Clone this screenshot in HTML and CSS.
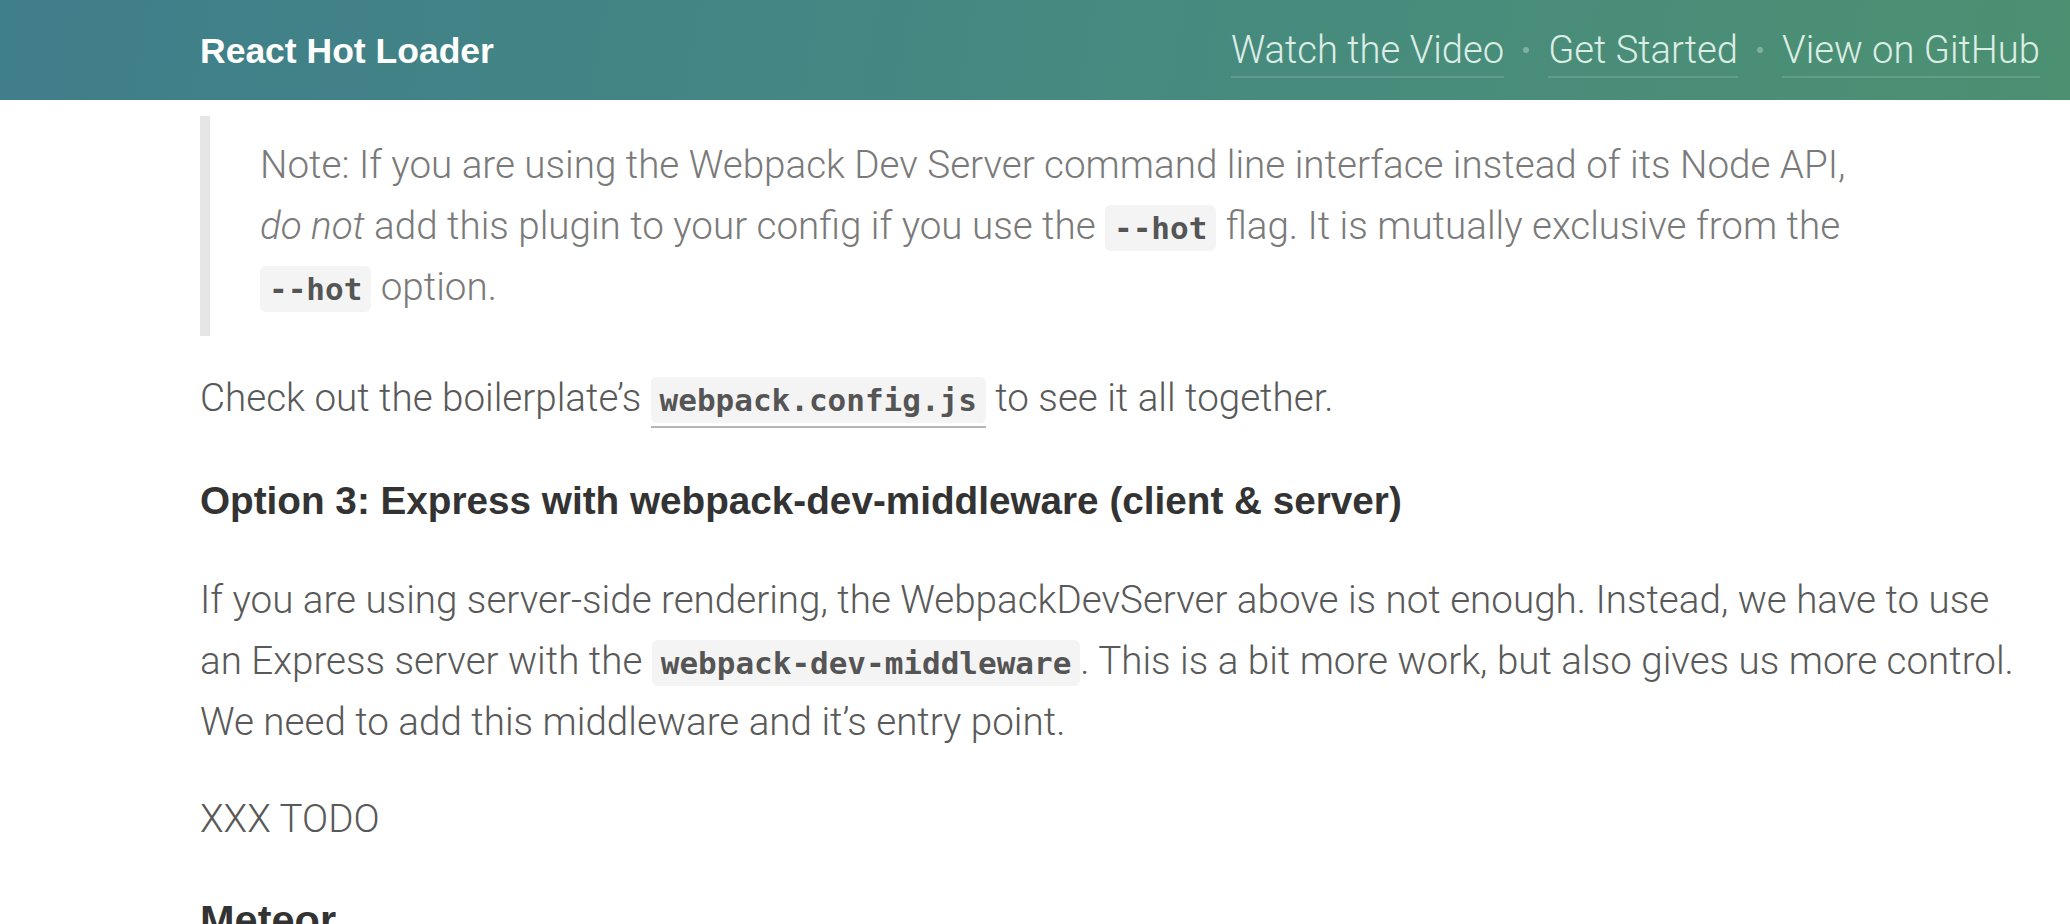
FILE: index.html
```html
<!DOCTYPE html>
<html lang="en">
<head>
    <meta charset="UTF-8">
    <meta name="viewport" content="width=device-width, initial-scale=1.0">
    <title>React Hot Loader</title>
    <link rel="stylesheet" href="styles.css">
</head>
<body>

<!-- Top bar -->
<header class="topbar">
    <a class="brand" href="#">React Hot Loader</a>
    <nav class="topnav">
        <a href="#">Watch the Video</a>
        <span class="dot"></span>
        <a href="#">Get Started</a>
        <span class="dot"></span>
        <a href="#">View on GitHub</a>
    </nav>
</header>

<div class="content">
    <blockquote>
        <p>Note: If you are using the Webpack Dev Server command line interface instead of its Node API,
        <em>do not</em> add this plugin to your config if you use the <code>--hot</code> flag. It is mutually exclusive from the
        <code>--hot</code> option.</p>
    </blockquote>

    <p>Check out the boilerplate’s <a class="code-link" href="#"><code>webpack.config.js</code></a> to see it all together.</p>

    <h4>Option 3: Express with webpack-dev-middleware (client &amp; server)</h4>

    <p>If you are using server-side rendering, the WebpackDevServer above is not enough. Instead, we have to use an Express server with the <code>webpack-dev-middleware</code>. This is a bit more work, but also gives us more control. We need to add this middleware and it’s entry point.</p>

    <p>XXX TODO</p>

    <h3>Meteor</h3>
</div>

</body>
</html>
```
FILE: styles.css
```css
body {
    margin: 0;
    padding: 0;
    font-family: "Roboto", "Helvetica Neue", sans-serif;
    font-weight: 300;
    font-size: 38.6px;
    line-height: 60.8px;
    color: #595959;
    background-color: #fff;
}

/* Top bar */
.topbar {
    display: flex;
    justify-content: space-between;
    align-items: flex-start;
    height: 100px;
    box-sizing: border-box;
    padding: 0 30px 0 200px;
    background: linear-gradient(100deg, #3f7e8b 0%, #468a80 55%, #4c9072 100%);
}

.brand {
    margin-top: 34px;
    font-family: "Liberation Sans", Arial, sans-serif;
    font-weight: bold;
    font-size: 35.5px;
    line-height: 1;
    color: #fff;
    text-decoration: none;
}

.topnav {
    display: flex;
    align-items: flex-start;
    margin-top: 31px;
}

.topnav a {
    font-size: 38.2px;
    line-height: 1;
    padding-bottom: 7px;
    color: #dcede4;
    text-decoration: none;
    border-bottom: 2px solid rgba(255, 255, 255, 0.14);
}

.topnav .dot {
    width: 6px;
    height: 6px;
    margin: 16px 19px 0;
    border-radius: 50%;
    background-color: rgba(255, 255, 255, 0.3);
}

/* Article */
.content {
    width: 1830px;
    margin-left: 200px;
}

blockquote {
    margin: 16px 110px 32px 0;
    padding: 19px 50px;
    border-left: 10px solid #e6e6e6;
    color: #7a7a7a;
}

blockquote p {
    margin: 0;
}

p {
    margin: 0 0 37px;
}

h4 {
    margin: 42px 0 38px;
    font-family: "Liberation Sans", Arial, sans-serif;
    font-weight: bold;
    font-size: 38.7px;
    color: #333;
}

h3 {
    margin: 36px 0 0;
    font-family: "Liberation Sans", Arial, sans-serif;
    font-weight: bold;
    font-size: 41.5px;
    line-height: 66px;
    color: #333;
}

code {
    font-family: "DejaVu Sans Mono", monospace;
    font-weight: bold;
    font-size: 31px;
    line-height: 1;
    padding: 5px 9px;
    border-radius: 6px;
    background-color: #f4f4f4;
    color: #555;
}

.code-link {
    padding-bottom: 6px;
    border-bottom: 2px solid #b5b5b5;
    text-decoration: none;
}
```
